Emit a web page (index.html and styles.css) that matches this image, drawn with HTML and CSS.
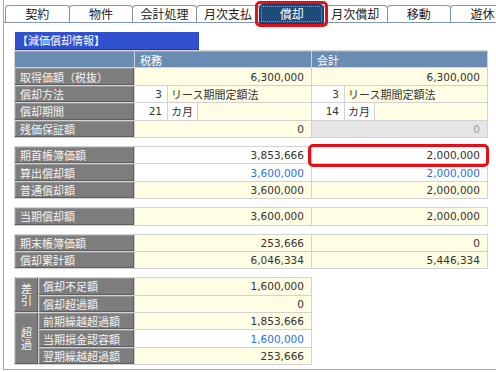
FILE: index.html
```html
<!DOCTYPE html>
<html lang="ja">
<head>
<meta charset="utf-8">
<title>減価償却情報</title>
<link rel="stylesheet" href="styles.css">
</head>
<body>
<div class="frame">
  <div class="tabs">
    <div class="tab">契約</div>
    <div class="tab">物件</div>
    <div class="tab">会計処理</div>
    <div class="tab">月次支払</div>
    <div class="tab active">償却</div>
    <div class="tab">月次償却</div>
    <div class="tab">移動</div>
    <div class="tab">遊休</div>
  </div>
  <div class="content">
    <div class="title">【減価償却情報】</div>
    <div class="grid g3">
      <div class="hd"></div><div class="hd">税務</div><div class="hd">会計</div>
      <div class="lb">取得価額（税抜）</div><div class="v y">6,300,000</div><div class="v y">6,300,000</div>
      <div class="lb">償却方法</div>
      <div class="split s2"><div class="v n w">3</div><div class="t y">リース期間定額法</div></div>
      <div class="split s2"><div class="v n w">3</div><div class="t y">リース期間定額法</div></div>
      <div class="lb">償却期間</div>
      <div class="split s3"><div class="v n w">21</div><div class="t w">カ月</div><div class="y"></div></div>
      <div class="split s3"><div class="v n w">14</div><div class="t w">カ月</div><div class="y"></div></div>
      <div class="lb">残価保証額</div><div class="v y">0</div><div class="v g">0</div>
    </div>
    <div class="grid g3 sp">
      <div class="lb">期首帳簿価額</div><div class="v w">3,853,666</div><div class="v w mark">2,000,000</div>
      <div class="lb">算出償却額</div><div class="v w b">3,600,000</div><div class="v w b">2,000,000</div>
      <div class="lb">普通償却額</div><div class="v y">3,600,000</div><div class="v y">2,000,000</div>
    </div>
    <div class="grid g3 sp">
      <div class="lb">当期償却額</div><div class="v y">3,600,000</div><div class="v y">2,000,000</div>
    </div>
    <div class="grid g3 sp">
      <div class="lb">期末帳簿価額</div><div class="v y">253,666</div><div class="v y">0</div>
      <div class="lb">償却累計額</div><div class="v y">6,046,334</div><div class="v y">5,446,334</div>
    </div>
    <div class="grid g5 sp">
      <div class="lb vt r2"><span>差引</span></div>
      <div class="lb sub">償却不足額</div><div class="v y">1,600,000</div>
      <div class="lb sub">償却超過額</div><div class="v y">0</div>
      <div class="lb vt r3"><span>超過</span></div>
      <div class="lb sub">前期繰越超過額</div><div class="v y">1,853,666</div>
      <div class="lb sub">当期損金認容額</div><div class="v w b">1,600,000</div>
      <div class="lb sub">翌期繰越超過額</div><div class="v y">253,666</div>
    </div>
  </div>
</div>
</body>
</html>
```
FILE: styles.css
```css
html, body {
  margin: 0;
  padding: 0;
  background: #ffffff;
}
body {
  font-family: "Noto Sans CJK JP", sans-serif;
  font-size: 11px;
  color: #333333;
  width: 496px;
  height: 372px;
  overflow: hidden;
}
.frame {
  margin-left: 3px;
  height: 369px;
  border-left: 1px solid #a8a8a8;
  border-bottom: 1px solid #a8a8a8;
}
.tabs {
  display: flex;
  align-items: flex-start;
  height: 17px;
  padding: 5px 0 0 1px;
  border-bottom: 1px solid #7d98b6;
}
.tab {
  flex: 0 0 auto;
  box-sizing: border-box;
  width: 64.6px;
  height: 17px;
  margin-right: -1px;
  border: 1px solid #7d98b6;
  border-bottom: 0;
  border-radius: 4px 4px 0 0;
  background: #ffffff;
  color: #222222;
  font-size: 12px;
  line-height: 16px;
  text-align: center;
}
.tab.active {
  position: relative;
  z-index: 2;
  height: 20px;
  margin-top: -1px;
  border: 1px solid #1a3d66;
  background: #1f4b7b;
  color: #ffffff;
  line-height: 18px;
  outline: 1px dotted #7fa0c4;
  outline-offset: -3px;
}
.tab.active::after {
  content: "";
  position: absolute;
  left: -5px;
  right: -5px;
  top: -4px;
  bottom: -4px;
  border: 3px solid #e60f17;
  border-radius: 5px;
}
.content {
  padding: 9px 0 0 10px;
}
.title {
  box-sizing: border-box;
  width: 184px;
  height: 18px;
  margin-left: 1px;
  padding-left: 2px;
  background: #3050cf;
  border-bottom: 1px solid #24399a;
  color: #ffffff;
  line-height: 17px;
}
.grid {
  display: grid;
  width: fit-content;
  gap: 1px;
  padding: 1px;
  background: #d2d2d2;
  grid-auto-rows: 16.4px;
}
.g3 {
  grid-template-columns: 119px 176px 175px;
}
.g5 {
  grid-template-columns: 23px 95px 176px;
}
.sp {
  margin-top: 8px;
}
.hd {
  background: #6b8cb2;
  border-top: 1px solid #8eaacb;
  box-sizing: border-box;
  color: #ffffff;
  padding-left: 5px;
  display: flex;
  align-items: center;
}
.lb {
  background: #7d7d7d;
  color: #f4f4f4;
  padding-left: 5px;
  display: flex;
  align-items: center;
  box-shadow: inset -1px -1px 0 #5e5e5e, inset 1px 1px 0 #969696;
  white-space: nowrap;
}
.lb.sub {
  padding-left: 4px;
}
.vt {
  padding-left: 0;
  justify-content: center;
}
.vt span {
  writing-mode: vertical-rl;
  text-orientation: upright;
  letter-spacing: 1px;
  line-height: 12px;
}
.r2 {
  grid-row: span 2;
}
.r3 {
  grid-row: span 3;
}
.v {
  font-family: "DejaVu Sans", "Noto Sans CJK JP", sans-serif;
  font-size: 10.5px;
  display: flex;
  align-items: center;
  justify-content: flex-end;
  padding-right: 7px;
}
.v.n {
  padding-right: 5px;
}
.t {
  display: flex;
  align-items: center;
  padding-left: 3px;
  white-space: nowrap;
}
.y {
  background: #fffde4;
}
.w {
  background: #ffffff;
}
.g {
  background: #e6e6e6;
  color: #9a9a9a;
}
.b {
  color: #2a72d8;
}
.split {
  display: grid;
  gap: 1px;
  background: #d2d2d2;
}
.s2 {
  grid-template-columns: 32px 1fr;
}
.s3 {
  grid-template-columns: 32px 29px 1fr;
}
.mark {
  position: relative;
}
.mark::after {
  content: "";
  position: absolute;
  left: -4px;
  right: -2px;
  top: -3px;
  bottom: -4px;
  border: 3px solid #e60f17;
  border-radius: 5px;
}
```
